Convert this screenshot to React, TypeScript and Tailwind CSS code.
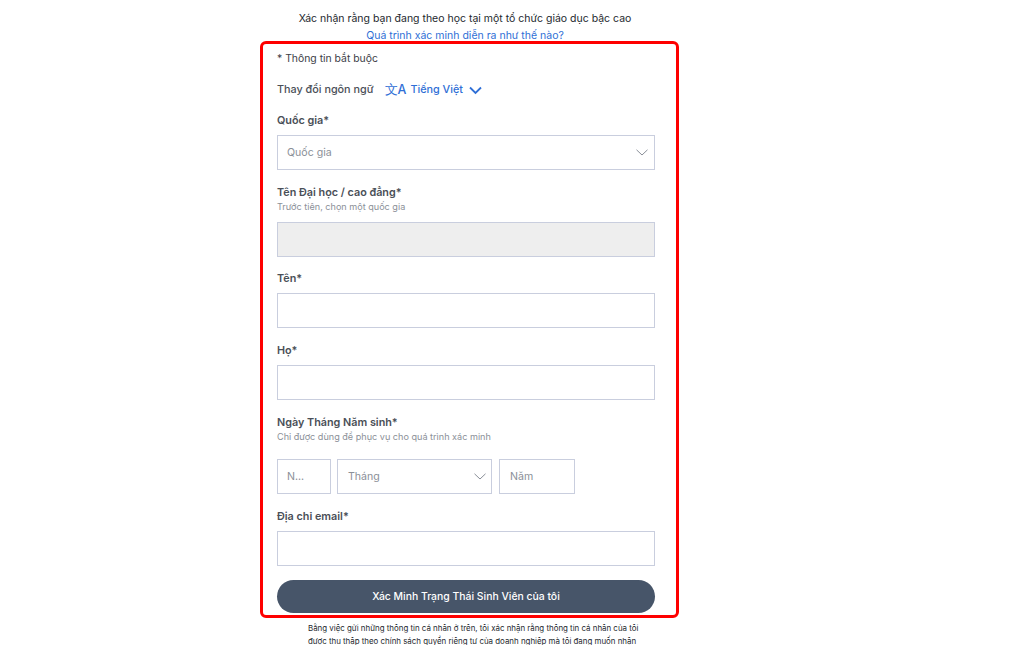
import React from 'react';

const inputBox = 'block h-[35px] border border-[#c9cede] bg-white';

function Label({ text, hint }: { text: string; hint?: string }) {
  return (
    <div>
      <div className="h-[16px] text-[10.8px] leading-[17px] font-semibold text-[#4a4f57]">{text}</div>
      {hint && <div className="h-[15px] text-[9.1px] leading-[14px] text-[#8b9098]">{hint}</div>}
    </div>
  );
}

function Chevron() {
  return (
    <svg width="12" height="7" viewBox="0 0 12 7" fill="none">
      <path d="M.5 .8L6 6l5.500-5.200" stroke="#8a8f98" strokeWidth="1" />
    </svg>
  );
}

export default function App() {
  return (
    <div className="h-[645px] w-[1024px] overflow-hidden bg-white pl-[260px] font-['Inter','Liberation_Sans',sans-serif]">
      <div className="w-[410px] pt-[10px] text-center text-[10.5px] leading-[17px]">
        <div className="text-[#24282e]">Xác nhận rằng bạn đang theo học tại một tổ chức giáo dục bậc cao</div>
        <div className="text-[#2f6fd6]">Quá trình xác minh diễn ra như thế nào?</div>
      </div>

      {/* Form card */}
      <div className="mt-[-3px] h-[577px] w-[419px] rounded-[6px] border-[3px] border-[#fe0000] pl-[14px] pr-[21px] pt-[7px]">
        <div className="h-[16px] text-[10.4px] leading-[16px] text-[#3c4047]">* Thông tin bắt buộc</div>

        <div className="mt-[15px] flex h-[16px] items-center text-[10.8px] font-medium text-[#4a4f57]">
          <span>Thay đổi ngôn ngữ</span>
          <span className="ml-[11px] text-[12.5px] font-medium text-[#2f6fd6]">文A</span>
          <span className="ml-[4px] font-medium text-[#2f6fd6]">Tiếng Việt</span>
          <svg className="ml-[6px]" width="13" height="9" viewBox="0 0 13 9" fill="none">
            <path d="M1 1.500l5.500 5.500 5.500-5.500" stroke="#2f6fd6" strokeWidth="1.8" />
          </svg>
        </div>

        <div className="mt-[14px]">
          <Label text="Quốc gia*" />
        </div>
        <div className={`${inputBox} mt-[7px] flex w-[378px] items-center justify-between pl-[9px] pr-[6px] text-[10.6px] text-[#8b9098]`}>
          <span>Quốc gia</span>
          <Chevron />
        </div>

        <div className="mt-[14px]">
          <Label text="Tên Đại học / cao đẳng*" hint="Trước tiên, chọn một quốc gia" />
        </div>
        <div className={`${inputBox} mt-[7px] w-[378px] !bg-[#eeeeee]`} />

        <div className="mt-[13px]">
          <Label text="Tên*" />
        </div>
        <div className={`${inputBox} mt-[7px] w-[378px]`} />

        <div className="mt-[14px]">
          <Label text="Họ*" />
        </div>
        <div className={`${inputBox} mt-[7px] w-[378px]`} />

        <div className="mt-[14px]">
          <Label text="Ngày Tháng Năm sinh*" hint="Chỉ được dùng để phục vụ cho quá trình xác minh" />
        </div>
        <div className="mt-[14px] flex text-[10.6px] text-[#8b9098]">
          <div className={`${inputBox} flex w-[54px] items-center pl-[9px]`}>N...</div>
          <div className={`${inputBox} ml-[6px] flex w-[155px] items-center justify-between pl-[10px] pr-[5px]`}>
            <span>Tháng</span>
            <Chevron />
          </div>
          <div className={`${inputBox} ml-[7px] flex w-[76px] items-center pl-[10px]`}>Năm</div>
        </div>

        <div className="mt-[14px]">
          <Label text="Địa chỉ email*" />
        </div>
        <div className={`${inputBox} mt-[7px] w-[378px]`} />

        <div className="mt-[14px] flex h-[33px] w-[378px] items-center justify-center rounded-full bg-[#475569] text-[10.4px] font-medium text-white">
          Xác Minh Trạng Thái Sinh Viên của tôi
        </div>
      </div>

      <div className="ml-[48px] whitespace-nowrap pt-[4px] text-[7.9px] leading-[13px] text-[#24282e]">
        <div>Bằng việc gửi những thông tin cá nhân ở trên, tôi xác nhận rằng thông tin cá nhân của tôi</div>
        <div>được thu thập theo chính sách quyền riêng tư của doanh nghiệp mà tôi đang muốn nhận</div>
      </div>
    </div>
  );
}
